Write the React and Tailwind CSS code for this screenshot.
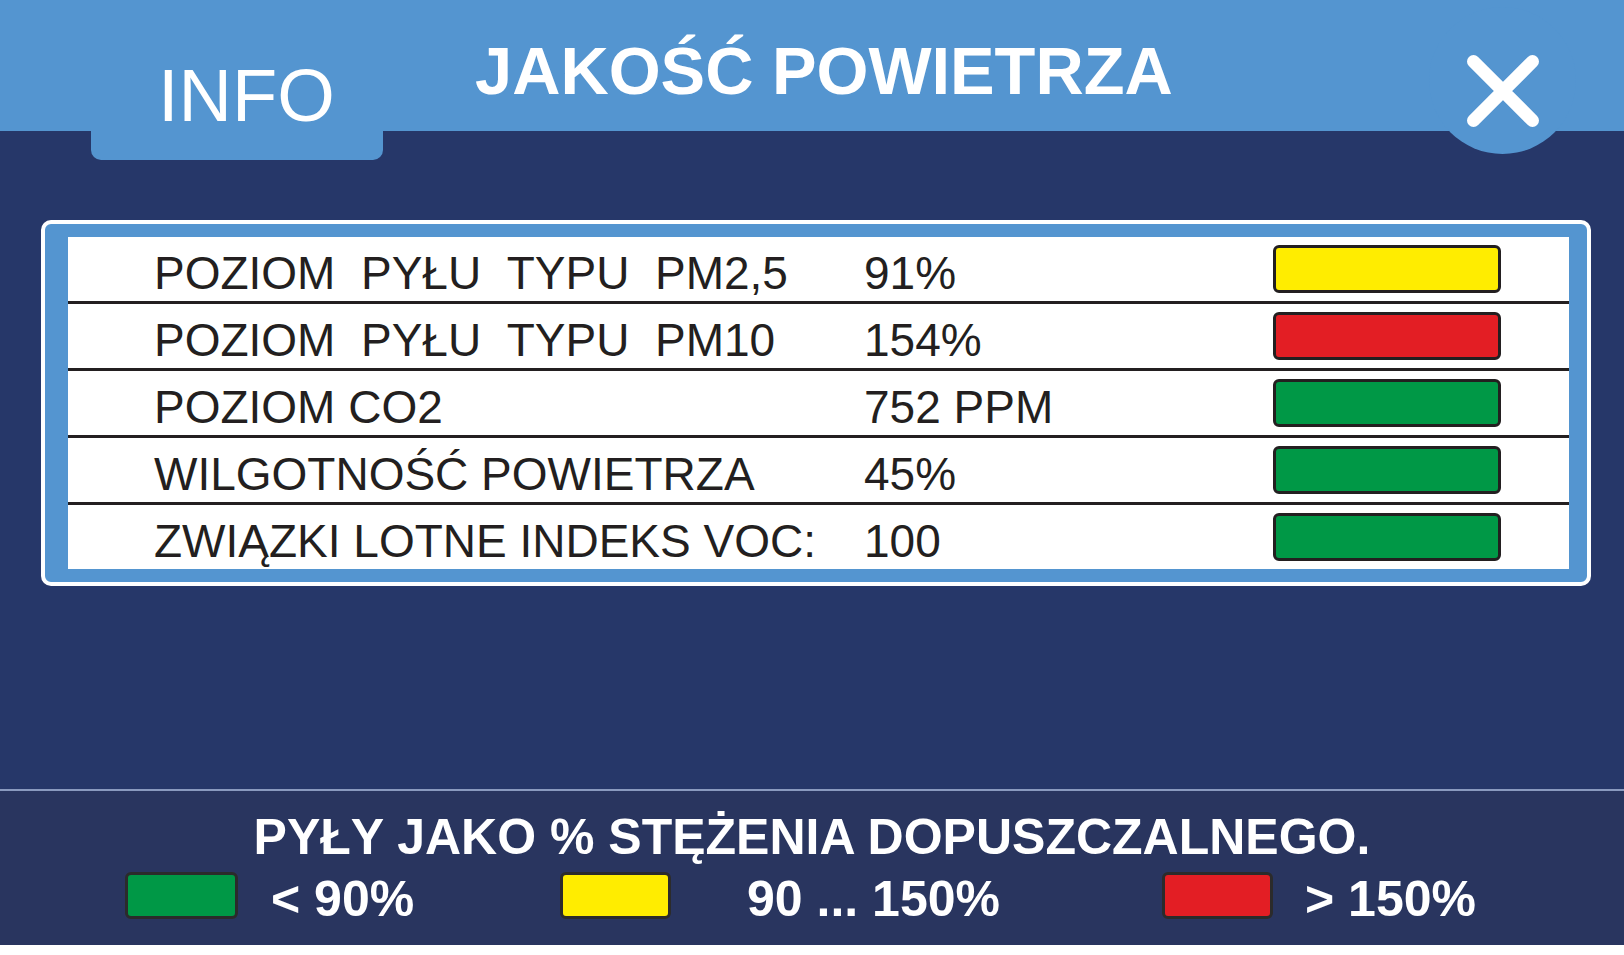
export default function App() {
  const rows = [
    { label: "POZIOM\u00a0\u00a0PYŁU\u00a0\u00a0TYPU\u00a0\u00a0PM2,5", value: "91%", color: "bg-[#ffed00]" },
    { label: "POZIOM\u00a0\u00a0PYŁU\u00a0\u00a0TYPU\u00a0\u00a0PM10", value: "154%", color: "bg-[#e31e24]" },
    { label: "POZIOM CO2", value: "752 PPM", color: "bg-[#009846]" },
    { label: "WILGOTNOŚĆ POWIETRZA", value: "45%", color: "bg-[#009846]" },
    { label: "ZWIĄZKI LOTNE INDEKS VOC:", value: "100", color: "bg-[#009846]" },
  ];
  return (
    <div className="w-[1624px] h-[955px] bg-white overflow-hidden" style={{ fontFamily: '"Liberation Sans", Arial, sans-serif' }}>
      <div className="h-[945px] flex flex-col bg-[#263769]">
        {/* header */}
        <div className="h-[131px] shrink-0 flex items-start bg-[#5495d0] pl-[91px] relative z-10">
          <div className="w-[292px] h-[160px] shrink-0 bg-[#5495d0] rounded-b-[10px] pl-[67px] pt-[59px]">
            <span className="block text-[74px] leading-none text-white">INFO</span>
          </div>
          <div className="ml-[92px] pt-[38px] text-[66.8px] leading-none font-bold text-white whitespace-nowrap">
            JAKOŚĆ POWIETRZA
          </div>
          <div className="ml-auto mr-[48px] mt-[7px] w-[147px] h-[147px] shrink-0 rounded-full bg-[#5495d0] flex justify-center">
            <svg className="mt-[48px]" width="72" height="72" viewBox="0 0 72 72">
              <path d="M6.5 6.5 L65.5 65.5 M65.5 6.5 L6.5 65.5" stroke="white" strokeWidth="13" strokeLinecap="round" />
            </svg>
          </div>
        </div>

        {/* main */}
        <div className="flex-1 pt-[89px] pl-[41px]">
          <div className="w-[1550px] border-[4px] border-white rounded-[10px] bg-[#5495d0] pt-[13px] pl-[23px] pr-[18px] pb-[13px]">
            <div className="bg-white flex flex-col">
              {rows.map((r, i) => (
                <div
                  key={i}
                  className={
                    "h-[64px] flex items-center text-[46px] text-[#231f20] " +
                    (i < rows.length - 1 ? "box-content border-b-[3px] border-[#231f20]" : "")
                  }
                >
                  <div className="w-[796px] pl-[86px] pt-[8px] leading-[52px] whitespace-nowrap">{r.label}</div>
                  <div className="flex-1 pt-[8px] leading-[52px] whitespace-nowrap">{r.value}</div>
                  <div className={"w-[228px] h-[48px] mr-[68px] rounded-[6px] border-[3px] border-[#231f20] " + r.color} />
                </div>
              ))}
            </div>
          </div>
        </div>

        {/* footer */}
        <div className="h-[156px] shrink-0 border-t-2 border-[#8a9abf] bg-[#29355f] pt-[21px]">
          <div className="text-center text-[50px] leading-none font-bold text-white whitespace-nowrap">
            PYŁY JAKO % STĘŻENIA DOPUSZCZALNEGO.
          </div>
          <div className="flex items-start mt-[10px] pl-[125px] text-[50px] leading-none font-bold text-white whitespace-nowrap">
            <div className="w-[435px] flex items-start shrink-0">
              <div className="w-[113px] h-[47px] rounded-[6px] border-[3px] border-[#2b2b2b] bg-[#009846]" />
              <span className="ml-[33px] mt-[2px]">&lt; 90%</span>
            </div>
            <div className="w-[602px] flex items-start shrink-0">
              <div className="w-[111px] h-[47px] rounded-[6px] border-[3px] border-[#2b2b2b] bg-[#ffed00]" />
              <span className="ml-[76px] mt-[2px]">90 ... 150%</span>
            </div>
            <div className="flex items-start shrink-0">
              <div className="w-[111px] h-[47px] rounded-[6px] border-[3px] border-[#2b2b2b] bg-[#e31e24]" />
              <span className="ml-[32px] mt-[2px]">&gt; 150%</span>
            </div>
          </div>
        </div>
      </div>
    </div>
  );
}
